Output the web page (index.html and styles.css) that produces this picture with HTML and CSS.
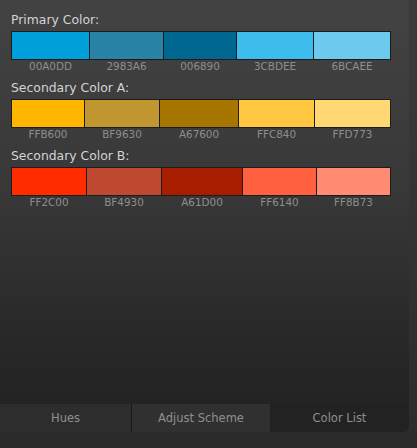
FILE: index.html
```html
<!DOCTYPE html>
<html>
<head>
<meta charset="utf-8">
<link rel="stylesheet" href="styles.css">
</head>
<body>
<div class="app">
  <div class="panel">
    <div class="content">
      <section class="group">
        <div class="label">Primary Color:</div>
        <div class="swatches row-a">
          <div class="sw c1"></div><div class="sw c2"></div><div class="sw c3"></div><div class="sw c4"></div><div class="sw c5"></div>
        </div>
        <div class="codes row-a">
          <span>00A0DD</span><span>2983A6</span><span>006890</span><span>3CBDEE</span><span>6BCAEE</span>
        </div>
      </section>
      <section class="group">
        <div class="label">Secondary Color A:</div>
        <div class="swatches row-b">
          <div class="sw d1"></div><div class="sw d2"></div><div class="sw d3"></div><div class="sw d4"></div><div class="sw d5"></div>
        </div>
        <div class="codes row-b">
          <span>FFB600</span><span>BF9630</span><span>A67600</span><span>FFC840</span><span>FFD773</span>
        </div>
      </section>
      <section class="group">
        <div class="label">Secondary Color B:</div>
        <div class="swatches row-c">
          <div class="sw e1"></div><div class="sw e2"></div><div class="sw e3"></div><div class="sw e4"></div><div class="sw e5"></div>
        </div>
        <div class="codes row-c">
          <span>FF2C00</span><span>BF4930</span><span>A61D00</span><span>FF6140</span><span>FF8B73</span>
        </div>
      </section>
    </div>
    <div class="tabs">
      <div class="tab hues">Hues</div>
      <div class="tab-sep"></div>
      <div class="tab adjust">Adjust Scheme</div>
      <div class="tab active">Color List</div>
    </div>
  </div>
  <div class="side"></div>
</div>
<div class="footer"></div>
</body>
</html>
```

FILE: styles.css
```css
html, body {
  margin: 0;
  padding: 0;
}
body {
  width: 417px;
  height: 448px;
  overflow: hidden;
  background: #2b2b2b;
  font-family: "DejaVu Sans", Verdana, sans-serif;
}
.app {
  display: flex;
  height: 432px;
  background: linear-gradient(#3b3b3b, #2c2c2c);
}
.panel {
  width: 409px;
  height: 432px;
  display: flex;
  flex-direction: column;
  border-bottom-right-radius: 6px;
  overflow: hidden;
  background: linear-gradient(#434343 0px, #383838 190px, #2a2a2a 320px, #212121 432px);
}
.side {
  flex: 1;
}
.footer {
  height: 16px;
  background: #2b2b2b;
}
.content {
  padding: 12px 0 0 11px;
}
.group {
  height: 68px;
}
.label {
  height: 16px;
  line-height: 16px;
  font-size: 12.4px;
  color: #d2d4d6;
  margin-bottom: 3px;
}
.swatches {
  display: grid;
  width: 378px;
  height: 27px;
  padding: 1px;
  gap: 1px;
  background: #1c1c1c;
}
.codes {
  display: grid;
  width: 378px;
  padding: 0 1px;
  gap: 1px;
  height: 13px;
  line-height: 13px;
  font-size: 10.4px;
  color: #8e8e8e;
  text-align: center;
}
.row-a { grid-template-columns: 77px 73px 72px 76px 76px; }
.row-b { grid-template-columns: 72px 74px 78px 75px 75px; }
.row-c { grid-template-columns: 74px 74px 80px 73px 73px; }

.c1 { background: #00a0dd; }
.c2 { background: #2983a6; }
.c3 { background: #006890; }
.c4 { background: #3cbdee; }
.c5 { background: #6bcaee; }
.d1 { background: #ffb600; }
.d2 { background: #bf9630; }
.d3 { background: #a67600; }
.d4 { background: #ffc840; }
.d5 { background: #ffd773; }
.e1 { background: #ff2c00; }
.e2 { background: #bf4930; }
.e3 { background: #a61d00; }
.e4 { background: #ff6140; }
.e5 { background: #ff8b73; }

.tabs {
  margin-top: auto;
  height: 28px;
  display: flex;
}
.tab {
  height: 28px;
  line-height: 28px;
  text-align: center;
  font-size: 11.5px;
  color: #8f8f8f;
}
.hues {
  width: 131px;
  background: #2d2d2d;
}
.tab-sep {
  width: 1px;
  height: 27px;
  background: #191919;
}
.adjust {
  width: 138px;
  background: #303030;
}
.active {
  flex: 1;
  background: #222222;
}
```
